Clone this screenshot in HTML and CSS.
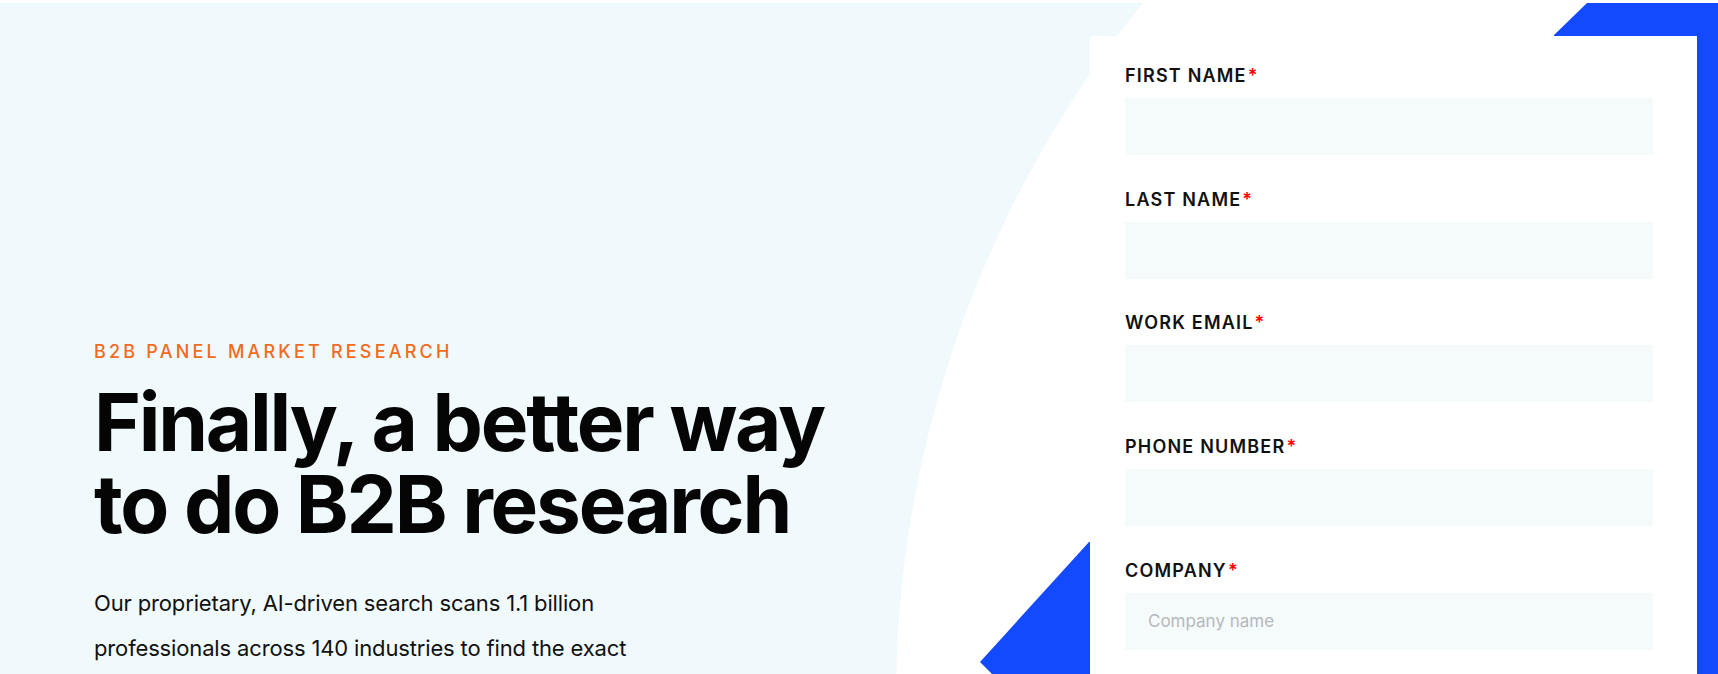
FILE: index.html
```html
<!DOCTYPE html>
<html lang="en">
<head>
<meta charset="utf-8">
<title>B2B Panel Market Research</title>
<link rel="stylesheet" href="styles.css">
</head>
<body>
<section class="hero">
  <div class="hero-circle"></div>
  <div class="hero-inner">
    <div class="copy">
      <p class="eyebrow">B2B PANEL MARKET RESEARCH</p>
      <h1 class="title">Finally, a better way to do B2B research</h1>
      <p class="lead">Our proprietary, AI-driven search scans 1.1 billion professionals across 140 industries to find the exact</p>
    </div>
    <div class="form-wrap">
      <div class="deco deco-top"></div>
      <div class="deco deco-bottom"></div>
      <form class="card">
        <div class="field">
          <label class="label">FIRST NAME<span class="req">*</span></label>
          <input class="input" type="text">
        </div>
        <div class="field">
          <label class="label">LAST NAME<span class="req">*</span></label>
          <input class="input" type="text">
        </div>
        <div class="field">
          <label class="label">WORK EMAIL<span class="req">*</span></label>
          <input class="input" type="email">
        </div>
        <div class="field">
          <label class="label">PHONE NUMBER<span class="req">*</span></label>
          <input class="input" type="tel">
        </div>
        <div class="field">
          <label class="label">COMPANY<span class="req">*</span></label>
          <input class="input" type="text" placeholder="Company name">
        </div>
      </form>
    </div>
  </div>
</section>
</body>
</html>
```
FILE: styles.css
```css
* { box-sizing: border-box; }
html, body { margin: 0; padding: 0; }
body {
  background: #ffffff;
  font-family: "Inter", "Liberation Sans", sans-serif;
  color: #0a0a0a;
  padding-top: 3px;
  overflow: hidden;
}
.hero {
  position: relative;
  height: 671px;
  background: #f0f9fc;
  overflow: hidden;
}
.hero-circle {
  position: absolute;
  left: 896px;
  top: -410px;
  width: 2214px;
  height: 2214px;
  border-radius: 50%;
  background: #ffffff;
}
.hero-inner {
  position: relative;
  display: flex;
  justify-content: space-between;
  padding-left: 94px;
  padding-right: 21px;
}
.copy {
  padding-top: 338px;
  max-width: 740px;
}
.eyebrow {
  margin: 0;
  font-size: 18px;
  line-height: 22px;
  font-weight: 500;
  letter-spacing: 3.2px;
  color: #f26b1d;
}
.title {
  margin: 17.5px 0 0;
  font-size: 80px;
  line-height: 82px;
  font-weight: 700;
  letter-spacing: -2.2px;
  color: #050505;
}
.lead {
  margin: 36.6px 0 0;
  width: 590px;
  font-size: 22px;
  line-height: 45px;
  font-weight: 400;
  letter-spacing: -0.15px;
  color: #111111;
}
.form-wrap {
  position: relative;
  margin-top: 33px;
  width: 607px;
}
.deco {
  position: absolute;
  background: #1349ff;
}
.deco-top {
  left: 464px;
  top: -33px;
  right: -21px;
  height: 700px;
  clip-path: polygon(33px 0, 100% 0, 100% 100%, 0 100%, 0 32px);
}
.deco-bottom {
  left: -110px;
  top: 506px;
  width: 220px;
  height: 132px;
  clip-path: polygon(109px 0, 100% 0, 100% 100%, 12px 100%, 0 120px);
}
.card {
  position: relative;
  background: #ffffff;
  padding: 29px 44px 40px 35px;
  min-height: 660px;
}
.field {
  margin-bottom: 33.7px;
}
.label {
  display: block;
  font-size: 18px;
  line-height: 22px;
  font-weight: 600;
  letter-spacing: 1.2px;
  color: #111111;
  margin-bottom: 11px;
}
.req {
  color: #ff0000;
  margin-left: 1px;
}
.input {
  display: block;
  width: 100%;
  height: 57px;
  border: 0;
  outline: 0;
  background: #f5fbfb;
  padding: 0 23px;
  font-family: "Inter", "Liberation Sans", sans-serif;
  font-size: 17px;
  color: #111;
}
.input::placeholder {
  color: #b5b8bb;
}
```
